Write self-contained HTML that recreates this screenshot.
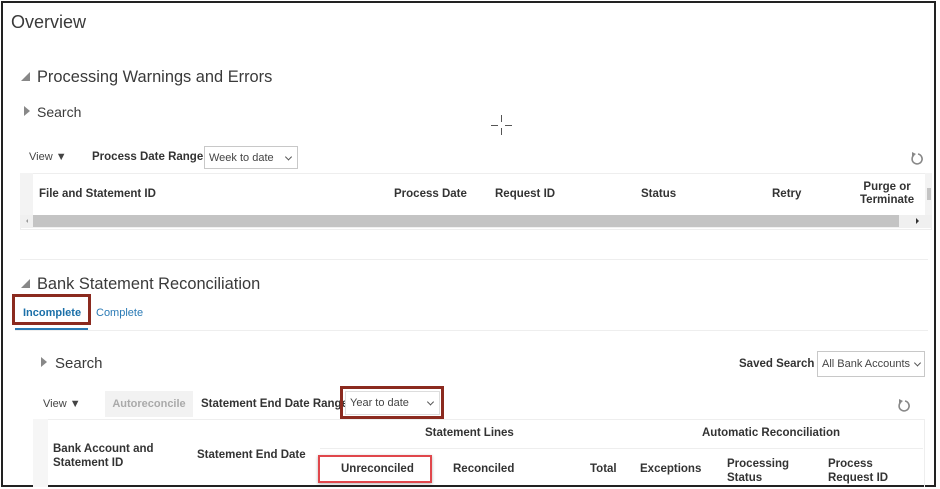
<!DOCTYPE html>
<html><head><meta charset="utf-8"><style>
*{margin:0;padding:0;box-sizing:border-box}
body{width:940px;height:489px;background:#fff;font-family:"Liberation Sans",Arial,sans-serif;color:#333;position:relative;overflow:hidden}
.a{position:absolute;white-space:nowrap}
.b{font-weight:bold;font-size:11.5px;color:#333}
.frame{position:absolute;left:1px;top:1px;width:935px;height:486px;border:2px solid #222;border-top-width:2px}
.sel{position:absolute;border:1px solid #c8c8c8;background:#fff;font-size:11px;color:#444;padding-left:4px;display:flex;align-items:center}
.chev{position:absolute;right:6px;top:50%;width:5px;height:5px;border-right:1.3px solid #555;border-bottom:1.3px solid #555;transform:translateY(-70%) rotate(45deg)}
.tri{position:absolute;width:0;height:0}
</style></head><body>
<div class="frame"></div>
<div class="a" style="left:11px;top:12px;font-size:18px;color:#3a3a3a">Overview</div>

<div class="tri" style="left:21px;top:72px;border-left:9px solid transparent;border-bottom:9px solid #888"></div>
<div class="a" style="left:37px;top:68px;font-size:16.4px;color:#3a3a3a">Processing Warnings and Errors</div>
<div class="tri" style="left:24px;top:106px;border-top:5px solid transparent;border-bottom:5px solid transparent;border-left:6px solid #888"></div>
<div class="a" style="left:37px;top:104px;font-size:14px;color:#3a3a3a">Search</div>

<div class="a" style="left:501px;top:115px;width:1px;height:7px;background:#555"></div>
<div class="a" style="left:501px;top:128px;width:1px;height:7px;background:#555"></div>
<div class="a" style="left:491px;top:125px;width:7px;height:1px;background:#555"></div>
<div class="a" style="left:505px;top:125px;width:7px;height:1px;background:#555"></div>

<div class="a" style="left:29px;top:151px;font-size:11px;color:#444">View ▼</div>
<div class="a b" style="left:92px;top:151px">Process Date Range</div>
<div class="sel" style="left:204px;top:146px;width:94px;height:23px">Week to date<span class="chev"></span></div>
<svg class="a" style="left:909px;top:150px" width="16" height="16" viewBox="0 0 16 16"><path d="M5 5 A5 5 0 1 0 9 4" fill="none" stroke="#888" stroke-width="1.6"/><path d="M3 2 L7 4 L3 7 Z" fill="#888"/></svg>

<div class="a" style="left:20px;top:173px;width:912px;height:57px;background:#fff;border:1px solid #eee"></div>
<div class="a" style="left:20px;top:173px;width:13px;height:42px;background:#f3f3f3"></div>
<div class="a b" style="left:39px;top:188px">File and Statement ID</div>
<div class="a b" style="left:394px;top:188px">Process Date</div>
<div class="a b" style="left:495px;top:188px">Request ID</div>
<div class="a b" style="left:641px;top:188px">Status</div>
<div class="a b" style="left:772px;top:188px">Retry</div>
<div class="a b" style="left:860px;top:181px;text-align:center;line-height:13px">Purge or<br>Terminate</div>
<div class="a" style="left:925px;top:173px;width:7px;height:42px;background:#f3f3f3"></div>
<div class="a" style="left:927px;top:188px;width:4px;height:12px;background:#c4c4c4"></div>
<div class="a" style="left:20px;top:215px;width:912px;height:13px;background:#f0f0f0"></div>
<div class="a" style="left:33px;top:215px;width:866px;height:12px;background:#c4c4c4"></div>
<div class="tri" style="left:916px;top:218px;border-top:3px solid transparent;border-bottom:3px solid transparent;border-left:3px solid #333"></div>
<div class="tri" style="left:26px;top:219px;border-top:2px solid transparent;border-bottom:2px solid transparent;border-right:2px solid #999"></div>

<div class="a" style="left:20px;top:259px;width:908px;height:1px;background:#eee"></div>

<div class="tri" style="left:21px;top:279px;border-left:9px solid transparent;border-bottom:9px solid #888"></div>
<div class="a" style="left:37px;top:275px;font-size:16.4px;color:#3a3a3a">Bank Statement Reconciliation</div>
<div class="a" style="left:23px;top:307px;font-size:11px;font-weight:bold;color:#1a6fa8">Incomplete</div>
<div class="a" style="left:96px;top:307px;font-size:11px;color:#2a7ab5">Complete</div>
<div class="a" style="left:15px;top:328px;width:73px;height:2px;background:#2a7ab5"></div>
<div class="a" style="left:15px;top:330px;width:913px;height:1px;background:#eee"></div>
<div class="a" style="left:12px;top:294px;width:79px;height:31px;border:3px solid #8b2a1f"></div>

<div class="tri" style="left:41px;top:357px;border-top:5px solid transparent;border-bottom:5px solid transparent;border-left:6px solid #888"></div>
<div class="a" style="left:55px;top:355px;font-size:15px;color:#3a3a3a">Search</div>
<div class="a b" style="left:739px;top:358px">Saved Search</div>
<div class="sel" style="left:817px;top:351px;width:108px;height:26px">All Bank Accounts<span class="chev" style="right:4px"></span></div>

<div class="a" style="left:43px;top:398px;font-size:11px;color:#444">View ▼</div>
<div class="a" style="left:105px;top:391px;width:88px;height:26px;background:#f2f2f2;font-size:11px;color:#aaa;font-weight:bold;line-height:26px;text-align:center">Autoreconcile</div>
<div class="a b" style="left:201px;top:398px">Statement End Date Range</div>
<div class="sel" style="left:345px;top:391px;width:95px;height:24px;border-color:#ddd">Year to date<span class="chev"></span></div>
<div class="a" style="left:340px;top:386px;width:104px;height:33px;border:3px solid #8b2a1f"></div>
<svg class="a" style="left:896px;top:397px" width="16" height="16" viewBox="0 0 16 16"><path d="M5 5 A5 5 0 1 0 9 4" fill="none" stroke="#888" stroke-width="1.6"/><path d="M3 2 L7 4 L3 7 Z" fill="#888"/></svg>

<div class="a" style="left:33px;top:419px;width:892px;height:68px;border:1px solid #eee;border-bottom:none"></div>
<div class="a" style="left:33px;top:419px;width:15px;height:68px;background:#f6f6f6"></div>
<div class="a b" style="left:53px;top:442px;line-height:14px">Bank Account and<br>Statement ID</div>
<div class="a b" style="left:197px;top:449px">Statement End Date</div>
<div class="a b" style="left:425px;top:427px">Statement Lines</div>
<div class="a b" style="left:702px;top:427px">Automatic Reconciliation</div>
<div class="a" style="left:320px;top:448px;width:603px;height:1px;background:#eee"></div>
<div class="a b" style="left:341px;top:463px">Unreconciled</div>
<div class="a b" style="left:453px;top:463px">Reconciled</div>
<div class="a b" style="left:590px;top:463px">Total</div>
<div class="a b" style="left:640px;top:463px">Exceptions</div>
<div class="a b" style="left:727px;top:457px;line-height:14px">Processing<br>Status</div>
<div class="a b" style="left:828px;top:457px;line-height:14px">Process<br>Request ID</div>
<div class="a" style="left:318px;top:455px;width:114px;height:28px;border:2px solid #e0474c;box-shadow:0 1px 3px rgba(0,0,0,.3)"></div>
</body></html>
